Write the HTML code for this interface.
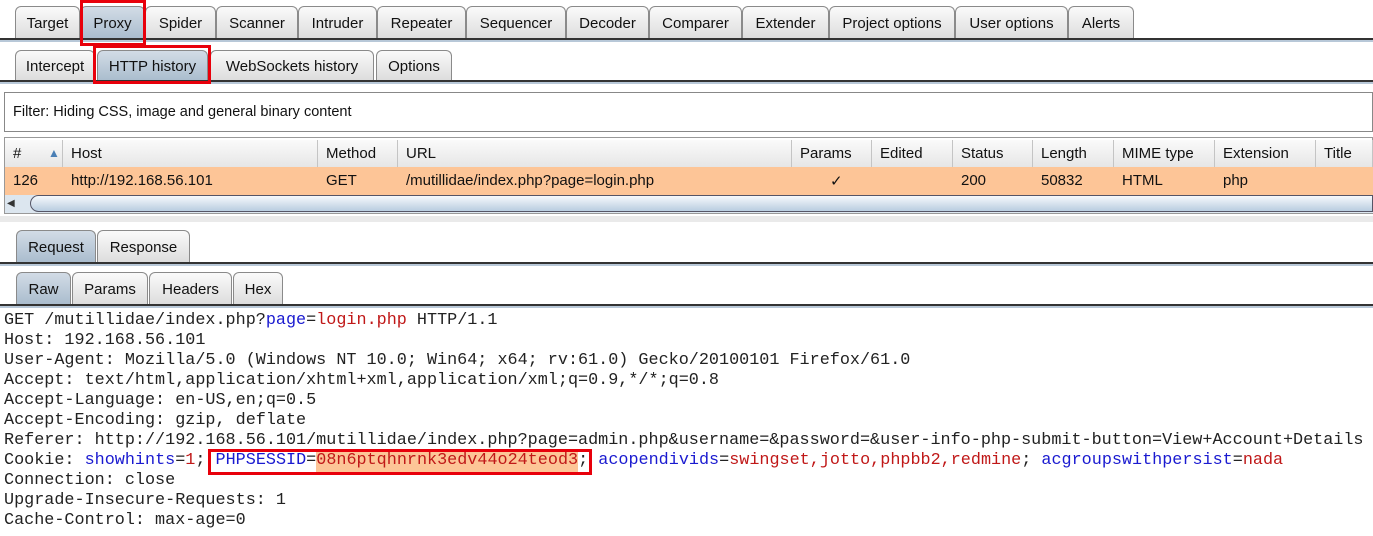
<!DOCTYPE html>
<html><head><meta charset="utf-8"><style>
*{margin:0;padding:0;box-sizing:border-box}
body{width:1373px;height:536px;background:#fff;position:relative;overflow:hidden;font-family:"Liberation Sans",Arial,sans-serif;font-size:15px;color:#111}
.a{position:absolute}
.tab{position:absolute;border:1px solid #8a8a8a;border-bottom:none;border-radius:6px 6px 0 0;background:linear-gradient(#fafafa,#dcdcdc);text-align:center;white-space:nowrap}
.sel{background:linear-gradient(#d2dce6,#a9bccd)}
.line{position:absolute;left:0;width:1373px;height:4px;border-top:2px solid #333;background:#b8c8d8}
.red{position:absolute;border:3px solid #e8000b}
.th{position:absolute;top:140px;height:27px;border-right:1px solid #c4c4c4;padding:5px 0 0 8px;background:linear-gradient(#fafafa,#e6e6e6)}
.td{position:absolute;top:172px;padding-left:8px}
pre{position:absolute;left:4px;top:311px;font-family:"Liberation Mono","Courier New",monospace;font-size:16.8px;line-height:20px;color:#222}
.b{color:#1a1ad0}.r{color:#c01818}
</style></head><body>
<!-- top tabs -->
<div class="tab" style="left:15px;top:6px;width:65px;height:33px;padding-top:8px">Target</div>
<div class="tab sel" style="left:80px;top:6px;width:65px;height:33px;padding-top:8px">Proxy</div>
<div class="tab" style="left:145px;top:6px;width:71px;height:33px;padding-top:8px">Spider</div>
<div class="tab" style="left:216px;top:6px;width:82px;height:33px;padding-top:8px">Scanner</div>
<div class="tab" style="left:298px;top:6px;width:79px;height:33px;padding-top:8px">Intruder</div>
<div class="tab" style="left:377px;top:6px;width:89px;height:33px;padding-top:8px">Repeater</div>
<div class="tab" style="left:466px;top:6px;width:100px;height:33px;padding-top:8px">Sequencer</div>
<div class="tab" style="left:566px;top:6px;width:83px;height:33px;padding-top:8px">Decoder</div>
<div class="tab" style="left:649px;top:6px;width:93px;height:33px;padding-top:8px">Comparer</div>
<div class="tab" style="left:742px;top:6px;width:87px;height:33px;padding-top:8px">Extender</div>
<div class="tab" style="left:829px;top:6px;width:126px;height:33px;padding-top:8px">Project options</div>
<div class="tab" style="left:955px;top:6px;width:113px;height:33px;padding-top:8px">User options</div>
<div class="tab" style="left:1068px;top:6px;width:66px;height:33px;padding-top:8px">Alerts</div>
<div class="line" style="top:38px"></div>
<!-- sub tabs -->
<div class="tab" style="left:15px;top:50px;width:80px;height:31px;padding-top:7px">Intercept</div>
<div class="tab sel" style="left:97px;top:50px;width:111px;height:31px;padding-top:7px">HTTP history</div>
<div class="tab" style="left:210px;top:50px;width:164px;height:31px;padding-top:7px">WebSockets history</div>
<div class="tab" style="left:376px;top:50px;width:76px;height:31px;padding-top:7px">Options</div>
<div class="line" style="top:80px"></div>
<div class="red" style="left:80px;top:0;width:66px;height:46px"></div>
<div class="red" style="left:93px;top:45px;width:118px;height:39px"></div>
<!-- filter -->
<div class="a" style="left:4px;top:92px;width:1369px;height:40px;border:1px solid #888;padding:11px 0 0 8px;font-size:14.5px">Filter: Hiding CSS, image and general binary content</div>
<!-- table -->
<div class="a" style="left:4px;top:137px;width:1369px;height:77px;border:1px solid #999;background:#fff"></div>
<div class="th" style="left:5px;width:58px">#<span style="position:absolute;left:43px;top:6px;color:#4a7fb5;font-size:12px">▲</span></div>
<div class="th" style="left:63px;width:255px">Host</div>
<div class="th" style="left:318px;width:80px">Method</div>
<div class="th" style="left:398px;width:394px">URL</div>
<div class="th" style="left:792px;width:80px">Params</div>
<div class="th" style="left:872px;width:81px">Edited</div>
<div class="th" style="left:953px;width:80px">Status</div>
<div class="th" style="left:1033px;width:81px">Length</div>
<div class="th" style="left:1114px;width:101px">MIME type</div>
<div class="th" style="left:1215px;width:101px">Extension</div>
<div class="th" style="left:1316px;width:57px">Title</div>
<div class="a" style="left:5px;top:167px;width:1368px;height:28px;background:#fdc597"></div>
<div class="td" style="left:5px">126</div>
<div class="td" style="left:63px">http://192.168.56.101</div>
<div class="td" style="left:318px">GET</div>
<div class="td" style="left:398px">/mutillidae/index.php?page=login.php</div>
<div class="td" style="left:822px">✓</div>
<div class="td" style="left:953px">200</div>
<div class="td" style="left:1033px">50832</div>
<div class="td" style="left:1114px">HTML</div>
<div class="td" style="left:1215px">php</div>
<div class="a" style="left:5px;top:195px;width:1368px;height:18px;background:#dce6ef"></div>
<div class="a" style="left:7px;top:196px;width:20px;height:16px;font-size:10px;color:#333;padding-top:2px">◀</div>
<div class="a" style="left:30px;top:195px;width:1343px;height:17px;border:1px solid #556;border-radius:12px 0 0 12px;background:linear-gradient(#f6f9fc,#b9cde0)"></div>
<div class="a" style="left:0;top:216px;width:1373px;height:6px;background:#eaeaea"></div>
<!-- request tabs -->
<div class="tab sel" style="left:16px;top:230px;width:80px;height:33px;padding-top:8px">Request</div>
<div class="tab" style="left:97px;top:230px;width:93px;height:33px;padding-top:8px">Response</div>
<div class="line" style="top:262px"></div>
<div class="tab sel" style="left:16px;top:272px;width:55px;height:33px;padding-top:8px">Raw</div>
<div class="tab" style="left:72px;top:272px;width:76px;height:33px;padding-top:8px">Params</div>
<div class="tab" style="left:149px;top:272px;width:83px;height:33px;padding-top:8px">Headers</div>
<div class="tab" style="left:233px;top:272px;width:50px;height:33px;padding-top:8px">Hex</div>
<div class="line" style="top:304px"></div>
<div class="a" style="left:316px;top:452px;width:262px;height:20px;background:#fdc597"></div>
<pre>GET /mutillidae/index.php?<span class="b">page</span>=<span class="r">login.php</span> HTTP/1.1
Host: 192.168.56.101
User-Agent: Mozilla/5.0 (Windows NT 10.0; Win64; x64; rv:61.0) Gecko/20100101 Firefox/61.0
Accept: text/html,application/xhtml+xml,application/xml;q=0.9,*/*;q=0.8
Accept-Language: en-US,en;q=0.5
Accept-Encoding: gzip, deflate
Referer: http://192.168.56.101/mutillidae/index.php?page=admin.php&amp;username=&amp;password=&amp;user-info-php-submit-button=View+Account+Details
Cookie: <span class="b">showhints</span>=<span class="r">1</span>; <span class="b">PHPSESSID</span>=<span class="r">08n6ptqhnrnk3edv44o24teod3</span>; <span class="b">acopendivids</span>=<span class="r">swingset,jotto,phpbb2,redmine</span>; <span class="b">acgroupswithpersist</span>=<span class="r">nada</span>
Connection: close
Upgrade-Insecure-Requests: 1
Cache-Control: max-age=0</pre>
<div class="red" style="left:208px;top:449px;width:384px;height:26px"></div>
</body></html>
